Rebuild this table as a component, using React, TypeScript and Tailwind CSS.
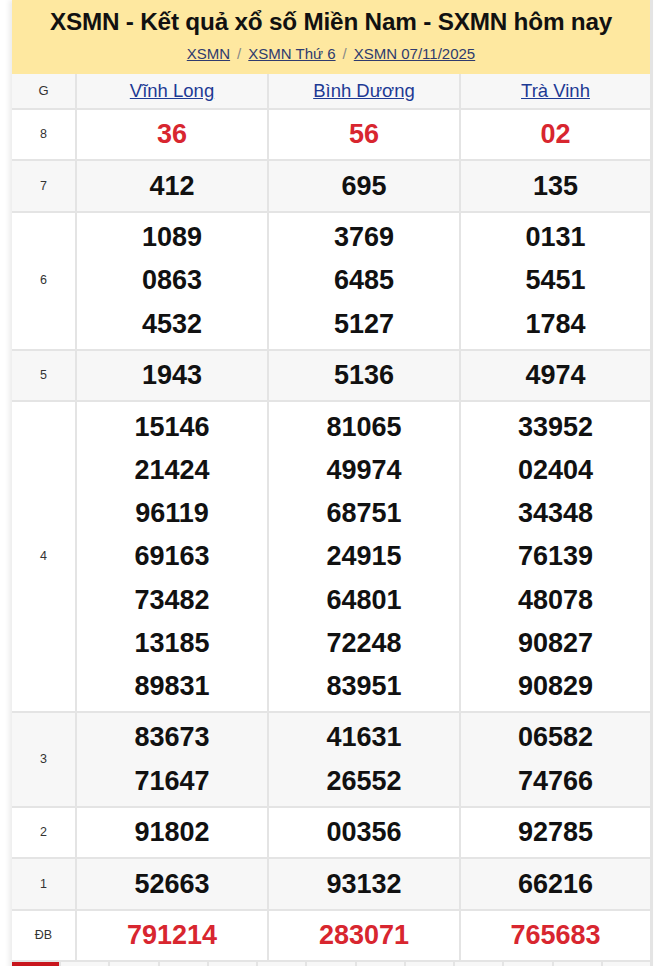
import React from "react";

type Row = { label: string; vals: string[][]; red?: boolean; gray?: boolean };

const rows: Row[] = [
  { label: "8", vals: [["36"], ["56"], ["02"]], red: true },
  { label: "7", vals: [["412"], ["695"], ["135"]], gray: true },
  {
    label: "6",
    vals: [
      ["1089", "0863", "4532"],
      ["3769", "6485", "5127"],
      ["0131", "5451", "1784"],
    ],
  },
  { label: "5", vals: [["1943"], ["5136"], ["4974"]], gray: true },
  {
    label: "4",
    vals: [
      ["15146", "21424", "96119", "69163", "73482", "13185", "89831"],
      ["81065", "49974", "68751", "24915", "64801", "72248", "83951"],
      ["33952", "02404", "34348", "76139", "48078", "90827", "90829"],
    ],
  },
  {
    label: "3",
    vals: [
      ["83673", "71647"],
      ["41631", "26552"],
      ["06582", "74766"],
    ],
    gray: true,
  },
  { label: "2", vals: [["91802"], ["00356"], ["92785"]] },
  { label: "1", vals: [["52663"], ["93132"], ["66216"]], gray: true },
  { label: "ĐB", vals: [["791214"], ["283071"], ["765683"]], red: true },
];

const provinces = ["Vĩnh Long", "Bình Dương", "Trà Vinh"];

export default function App() {
  return (
    <div
      className="w-[660px] h-[966px] overflow-hidden bg-white"
      style={{ fontFamily: '"Liberation Sans", Arial, sans-serif' }}
    >
      <div className="ml-[12px] w-[641px] border-r-[3px] border-[#e4e4e4] shadow-[-3px_0_5px_rgba(0,0,0,0.08)]">
        <div className="bg-[#fee8a0] h-[74px] flex flex-col items-center pt-[5px]">
          <h1 className="text-[24.3px] font-bold text-[#111] leading-[34px] tracking-[-0.2px]">
            XSMN - Kết quả xổ số Miền Nam - SXMN hôm nay
          </h1>
          <div className="text-[15px] leading-[20px] mt-[5px] text-[#2f3b6e] flex gap-[7px]">
            <a className="underline">XSMN</a>
            <span className="text-[#888]">/</span>
            <a className="underline">XSMN Thứ 6</a>
            <span className="text-[#888]">/</span>
            <a className="underline">XSMN 07/11/2025</a>
          </div>
        </div>
        <div className="grid grid-cols-[63px_192px_192px_1fr] bg-[#f7f7f7] h-[36px] border-b-2 border-[#e4e4e4]">
          <div className="flex items-center justify-center text-[13px] text-[#333]">G</div>
          {provinces.map((p) => (
            <div
              key={p}
              className="flex items-center justify-center border-l-2 border-[#e4e4e4]"
            >
              <a className="underline text-[18.5px] text-[#1d3a94]">{p}</a>
            </div>
          ))}
        </div>
        {rows.map((r) => (
          <div
            key={r.label}
            className={`grid grid-cols-[63px_192px_192px_1fr] border-b-2 border-[#e4e4e4] ${
              r.gray ? "bg-[#f7f7f7]" : "bg-white"
            }`}
          >
            <div className="flex items-center justify-center text-[12.5px] text-[#333]">
              {r.label}
            </div>
            {r.vals.map((col, i) => (
              <div
                key={i}
                className="border-l-2 border-[#e4e4e4] flex flex-col items-center pt-[3.3px] pb-[2.9px]"
              >
                {col.map((n, j) => (
                  <div
                    key={j}
                    className={`text-[27px] font-bold leading-[43.25px] ${
                      r.red ? "text-[#d8262f]" : "text-[#111]"
                    }`}
                  >
                    {n}
                  </div>
                ))}
              </div>
            ))}
          </div>
        ))}
        <div className="flex h-[10px]">
          {Array.from({ length: 13 }).map((_, i) => (
            <div
              key={i}
              className={`flex-1 ${
                i === 0 ? "bg-[#c8161d]" : "bg-[#f7f7f7] border-l-2 border-[#e4e4e4]"
              }`}
            />
          ))}
        </div>
      </div>
    </div>
  );
}
